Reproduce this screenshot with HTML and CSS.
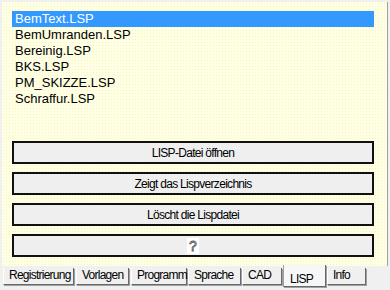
FILE: index.html
```html
<!DOCTYPE html>
<html>
<head>
<meta charset="utf-8">
<link rel="stylesheet" href="styles.css">
</head>
<body>
<div class="panel">
  <ul class="list">
    <li class="item selected">BemText.LSP</li>
    <li class="item">BemUmranden.LSP</li>
    <li class="item">Bereinig.LSP</li>
    <li class="item">BKS.LSP</li>
    <li class="item">PM_SKIZZE.LSP</li>
    <li class="item">Schraffur.LSP</li>
  </ul>
  <div class="buttons">
    <div class="btn">LISP-Datei öffnen</div>
    <div class="btn">Zeigt das Lispverzeichnis</div>
    <div class="btn">Löscht die Lispdatei</div>
    <div class="btn"><span class="qicon">?</span></div>
  </div>
</div>
<div class="tabs">
  <div class="tab t-reg">Registrierung</div>
  <div class="tab t-vor">Vorlagen</div>
  <div class="tab t-pro">Programm</div>
  <div class="tab t-spr">Sprache</div>
  <div class="tab t-cad">CAD</div>
  <div class="tab t-lisp active">LISP</div>
  <div class="tab t-info">Info</div>
</div>
</body>
</html>
```
FILE: styles.css
```css
html, body {
  margin: 0;
  padding: 0;
}
body {
  width: 390px;
  height: 290px;
  overflow: hidden;
  background: #f0f0f0;
  font-family: "Liberation Sans", Arial, sans-serif;
  color: #000;
}
.panel {
  margin: 2px 2px 0 2px;
  height: 264px;
  box-sizing: border-box;
  padding: 9px 13px 0 10px;
  border-right: 1px solid #a0a0a0;
  background-color: #ffffe4;
  background-image: radial-gradient(circle, #f4f4c8 0.7px, transparent 0.8px);
  background-size: 3px 3px;
}
.list {
  list-style: none;
  margin: 0 0 34px 0;
  padding: 0;
}
.item {
  height: 16px;
  line-height: 16px;
  font-size: 13px;
  padding-left: 3px;
  white-space: nowrap;
}
.item.selected {
  background: #3399ff;
  color: #fff;
}
.buttons {
  display: flex;
  flex-direction: column;
  gap: 8px;
}
.btn {
  height: 23px;
  box-sizing: border-box;
  border: 2px solid #111;
  background: #efefef;
  display: flex;
  align-items: center;
  justify-content: center;
  font-size: 12px;
  letter-spacing: -0.7px;
}
.qicon {
  display: inline-block;
  width: 12px;
  height: 16px;
  background: #fff;
  text-align: center;
  line-height: 16px;
  font-size: 14px;
  letter-spacing: 0;
  color: #fff;
  -webkit-text-stroke: 0.8px #555;
}
.tabs {
  display: flex;
  padding-left: 3px;
  height: 24px;
  align-items: flex-start;
}
.tab {
  box-sizing: border-box;
  height: 17px;
  margin-top: 2px;
  font-size: 12px;
  letter-spacing: -0.75px;
  line-height: 15px;
  padding-left: 5px;
  background: #f0f0f0;
  border-left: 1px solid #fff;
  border-right: 1px solid #696969;
  border-bottom: 1px solid #696969;
  box-shadow: 1px 1px 0 #a0a0a0;
  white-space: nowrap;
}
.tab.active {
  height: 22px;
  margin-top: -1px;
  padding-top: 8px;
  padding-left: 6px;
  line-height: 13px;
  background: #f7f7f7;
  border-left: 1px solid #a0a0a0;
}
.t-reg { width: 71px; margin-right: 2px; }
.t-vor { width: 53px; margin-right: 2px; }
.t-pro { width: 56px; margin-right: 1px; }
.t-spr { width: 53px; margin-right: 1px; }
.t-cad { width: 40px; margin-right: 1px; }
.t-lisp { width: 43px; margin-right: 1px; }
.t-info { width: 39px; }
```
